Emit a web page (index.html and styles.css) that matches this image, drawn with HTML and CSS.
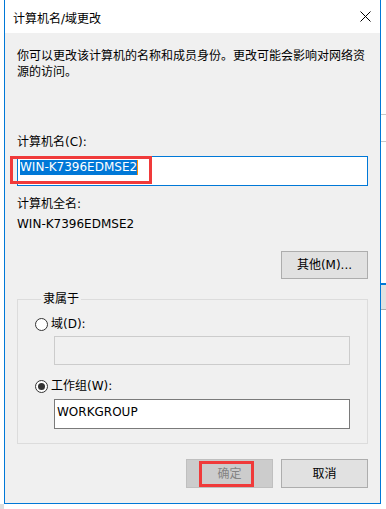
FILE: index.html
```html
<!DOCTYPE html>
<html lang="zh-CN">
<head>
<meta charset="utf-8">
<title>计算机名/域更改</title>
<link rel="stylesheet" href="styles.css">
</head>
<body>
<div class="desk">
  <div class="bg-line bg-line-1"></div>
  <div class="bg-line bg-line-2"></div>
  <div class="bg-btn"></div>
  <div class="bg-corner"></div>
</div>
<div class="window">
  <div class="titlebar">
    <span class="title">计算机名/域更改</span>
    <svg class="close" width="11" height="11" viewBox="0 0 11 11"><path d="M0.5 0.5 L10.5 10.5 M10.5 0.5 L0.5 10.5" stroke="#000" stroke-width="1" fill="none"/></svg>
  </div>
  <div class="content">
    <p class="intro">你可以更改该计算机的名称和成员身份。更改可能会影响对网络资源的访问。</p>
    <div class="label first">计算机名(C):</div>
    <div class="field-wrap">
      <div class="input focused"><span class="sel">WIN-K7396EDMSE2</span><span class="caret"></span></div>
      <div class="mark mark-name"></div>
    </div>
    <div class="label full">计算机全名:</div>
    <div class="value">WIN-K7396EDMSE2</div>
    <div class="btn-row more-row"><button class="btn">其他(M)...</button></div>
    <fieldset class="group">
      <legend>隶属于</legend>
      <div class="radio-row"><span class="radio"></span><span>域(D):</span></div>
      <div class="input disabled sub dom"></div>
      <div class="radio-row r2"><span class="radio checked"></span><span>工作组(W):</span></div>
      <div class="input sub wg">WORKGROUP</div>
    </fieldset>
    <div class="btn-row actions">
      <button class="btn disabled">确定<span class="mark mark-ok"></span></button>
      <button class="btn">取消</button>
    </div>
  </div>
</div>
</body>
</html>
```
FILE: styles.css
```css
* { box-sizing: border-box; }
html, body { margin: 0; padding: 0; }
body {
  width: 386px;
  height: 509px;
  background: #fff;
  font-family: "DejaVu Sans", "Noto Sans CJK SC", sans-serif;
  font-size: 12px;
  line-height: 16px;
  color: #000;
  position: relative;
  overflow: hidden;
}
.desk { position: absolute; inset: 0; }
.bg-line { position: absolute; left: 381px; width: 5px; height: 1px; background: #c8c8c8; }
.bg-line-1 { top: 114px; }
.bg-line-2 { top: 141px; }
.bg-btn { position: absolute; left: 381px; top: 283px; width: 5px; height: 27px; background: #e1e1e1; border-top: 2px solid #0078d7; border-bottom: 1px solid #adadad; }
.bg-corner { position: absolute; left: 0; top: 504px; width: 4px; height: 5px; background: #dedede; }

.window {
  position: relative;
  margin-left: 4px;
  width: 377px;
  height: 504px;
  border: 1px solid #0078d7;
  border-top: none;
  background: #f0f0f0;
  display: flex;
  flex-direction: column;
}
.titlebar {
  height: 33px;
  background: #fff;
  display: flex;
  justify-content: space-between;
  align-items: flex-start;
  padding-left: 8px;
  padding-right: 9px;
}
.title { margin-top: 11px; line-height: 16px; }
.close { margin-top: 11px; display: block; }

.content { flex: 1; padding: 15px 12px 15px 12px; }
.intro { margin: 0; line-height: 16px; }
.label.first { margin-top: 54px; }
.field-wrap { position: relative; margin-top: 6px; }
.input {
  display: flex;
  align-items: flex-start;
  background: #fff;
  border: 1px solid #7a7a7a;
  padding-left: 2px;
}
.input.focused { height: 30px; border-color: #0078d7; padding-top: 3px; }
.sel { background: #0078d7; color: #fff; line-height: 15px; height: 15px; }
.caret { width: 1px; height: 15px; background: #ff8c00; }
.label.full { margin-top: 10px; }
.value { margin-top: 4px; }

.btn-row { display: flex; justify-content: flex-end; gap: 8px; }
.more-row { margin-top: 19px; }
.btn {
  position: relative;
  width: 87px;
  height: 28px;
  margin: 0;
  padding: 0;
  font: inherit;
  color: #000;
  background: #e1e1e1;
  border: 1px solid #adadad;
  border-radius: 0;
}
.btn.disabled { background: #cccccc; border-color: #bfbfbf; color: #838383; }
.actions { margin-top: 15px; }
.actions .btn { height: 29px; }

.group {
  margin: 12px 0 0;
  padding: 0 17px 14px 17px;
  border: 1px solid #dcdcdc;
  min-width: 0;
}
.group legend { padding: 0 2px; margin-left: 6px; line-height: 16px; }
.radio-row { display: flex; align-items: center; height: 16px; margin-top: 9px; }
.radio-row.r2 { margin-top: 13px; }
.radio {
  width: 13px;
  height: 13px;
  border: 1px solid #333;
  border-radius: 50%;
  background: #fff;
  margin-right: 3px;
  display: flex;
  align-items: center;
  justify-content: center;
}
.radio.checked::after {
  content: "";
  width: 7px;
  height: 7px;
  border-radius: 50%;
  background: #333;
}
.input.sub { margin-left: 19px; width: 296px; }
.input.dom { margin-top: 4px; height: 29px; background: #f0f0f0; border-color: #cccccc; }
.input.wg { margin-top: 5px; height: 30px; padding-top: 4px; line-height: 16px; }

.mark { position: absolute; border: 3px solid #f03a3a; }
.mark-name { left: -7px; top: 0; width: 142px; height: 28px; }
.mark-ok { left: 12px; top: 1px; width: 55px; height: 26px; }
```
